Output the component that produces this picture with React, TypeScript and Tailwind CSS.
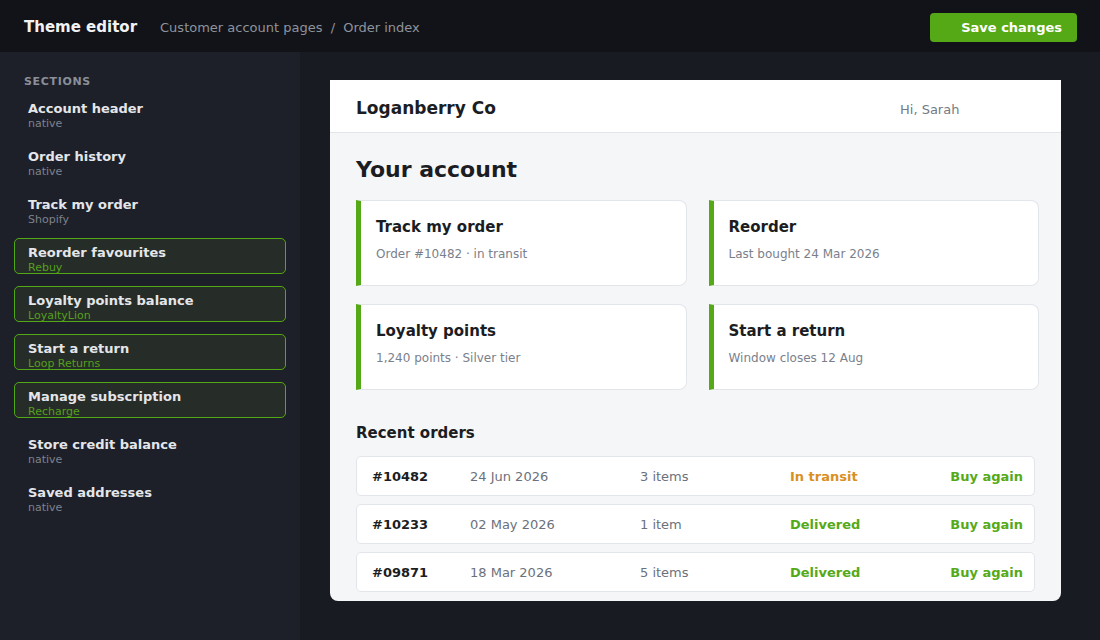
const sections = [
  { name: "Account header", source: "native", active: false },
  { name: "Order history", source: "native", active: false },
  { name: "Track my order", source: "Shopify", active: false },
  { name: "Reorder favourites", source: "Rebuy", active: true },
  { name: "Loyalty points balance", source: "LoyaltyLion", active: true },
  { name: "Start a return", source: "Loop Returns", active: true },
  { name: "Manage subscription", source: "Recharge", active: true },
  { name: "Store credit balance", source: "native", active: false },
  { name: "Saved addresses", source: "native", active: false },
];

const tiles = [
  { title: "Track my order", sub: "Order #10482 · in transit" },
  { title: "Reorder", sub: "Last bought 24 Mar 2026" },
  { title: "Loyalty points", sub: "1,240 points · Silver tier" },
  { title: "Start a return", sub: "Window closes 12 Aug" },
];

const orders = [
  { id: "#10482", date: "24 Jun 2026", items: "3 items", status: "In transit" },
  { id: "#10233", date: "02 May 2026", items: "1 item", status: "Delivered" },
  { id: "#09871", date: "18 Mar 2026", items: "5 items", status: "Delivered" },
];

export default function App() {
  return (
    <div className="h-[640px] w-[1100px] overflow-hidden bg-[#181b22] font-['DejaVu_Sans',sans-serif]">
      {/* top bar */}
      <div className="flex h-[52px] items-center bg-[#121318] pl-6 pr-[23px] pt-[2px]">
        <div className="text-[15px] font-bold text-[#f1f2f4]">Theme editor</div>
        <div className="ml-[23px] pt-px text-[13px] text-[#8e939d]">
          Customer account pages <span className="mx-[4px]">/</span> Order index
        </div>
        <button className="ml-auto flex h-[29px] w-[147px] items-center justify-end rounded-[4px] bg-[#56a916] pr-[15px] pt-[2px] text-[13px] font-bold text-white">
          Save changes
        </button>
      </div>

      <div className="flex h-[588px]">
        {/* sidebar */}
        <div className="w-[300px] bg-[#1d2029] pt-[22px]">
          <div className="mb-[3px] pl-6 text-[11px] font-bold uppercase tracking-[0.06em] text-[#8a8f99]">
            Sections
          </div>
          <div className="flex flex-col gap-3">
            {sections.map((s) => (
              <div
                key={s.name}
                className={
                  s.active
                    ? "mx-[14px] h-[36px] overflow-hidden rounded-[5px] border border-[#4fa814] bg-[#262c27] px-[13px] pt-[6px]"
                    : "mx-[14px] h-[36px] overflow-hidden border border-transparent px-[13px] pt-[6px]"
                }
              >
                <div className="text-[13px] font-bold leading-4 text-[#e4e6ea]">{s.name}</div>
                <div
                  className={
                    s.active
                      ? "text-[11px] leading-[14px] text-[#55a01e]"
                      : "text-[11px] leading-[14px] text-[#7d828d]"
                  }
                >
                  {s.source}
                </div>
              </div>
            ))}
          </div>
        </div>

        {/* preview */}
        <div className="flex-1 pl-[30px] pt-[28px]">
          <div className="h-[521px] w-[731px] overflow-hidden rounded-b-lg bg-[#f5f6f8]">
            <div className="flex h-[53px] items-center border-b border-[#e2e5ea] bg-white px-[26px] pt-[5px]">
              <div className="text-[17px] font-bold text-[#1b1d22]">Loganberry Co</div>
              <div className="ml-auto w-[135px] pt-[2px] text-[13px] text-[#747a85]">Hi, Sarah</div>
            </div>

            <div className="px-[26px] pt-[23px]">
              <h1 className="text-[22px] font-bold leading-7 text-[#1b1d22]">Your account</h1>

              <div className="mt-[16px] grid w-[683px] grid-cols-2 gap-x-[22px] gap-y-[18px]">
                {tiles.map((t) => (
                  <div
                    key={t.title}
                    className="h-[86px] rounded-r-lg border border-l-[5px] border-[#e2e5ea] border-l-[#56a916] bg-white pl-[15px] pt-[16px]"
                  >
                    <div className="text-[15px] font-bold leading-5 text-[#1b1d22]">{t.title}</div>
                    <div className="mt-[8px] text-[12px] text-[#7a808b]">{t.sub}</div>
                  </div>
                ))}
              </div>

              <h2 className="mt-[33px] text-[15px] font-bold leading-5 text-[#1b1d22]">Recent orders</h2>

              <div className="mt-[13px] flex w-[679px] flex-col gap-2">
                {orders.map((o) => (
                  <div
                    key={o.id}
                    className="flex h-[40px] items-center rounded-[5px] border border-[#e2e5ea] bg-white pl-[15px] pr-[11px] pt-[2px] text-[13px]"
                  >
                    <div className="w-[98px] font-bold text-[#1b1d22]">{o.id}</div>
                    <div className="w-[170px] text-[#6b717c]">{o.date}</div>
                    <div className="w-[150px] text-[#6b717c]">{o.items}</div>
                    <div
                      className={
                        o.status === "In transit"
                          ? "font-bold text-[#d9901f]"
                          : "font-bold text-[#56a916]"
                      }
                    >
                      {o.status}
                    </div>
                    <div className="ml-auto font-bold text-[#56a916]">Buy again</div>
                  </div>
                ))}
              </div>
            </div>
          </div>
        </div>
      </div>
    </div>
  );
}
